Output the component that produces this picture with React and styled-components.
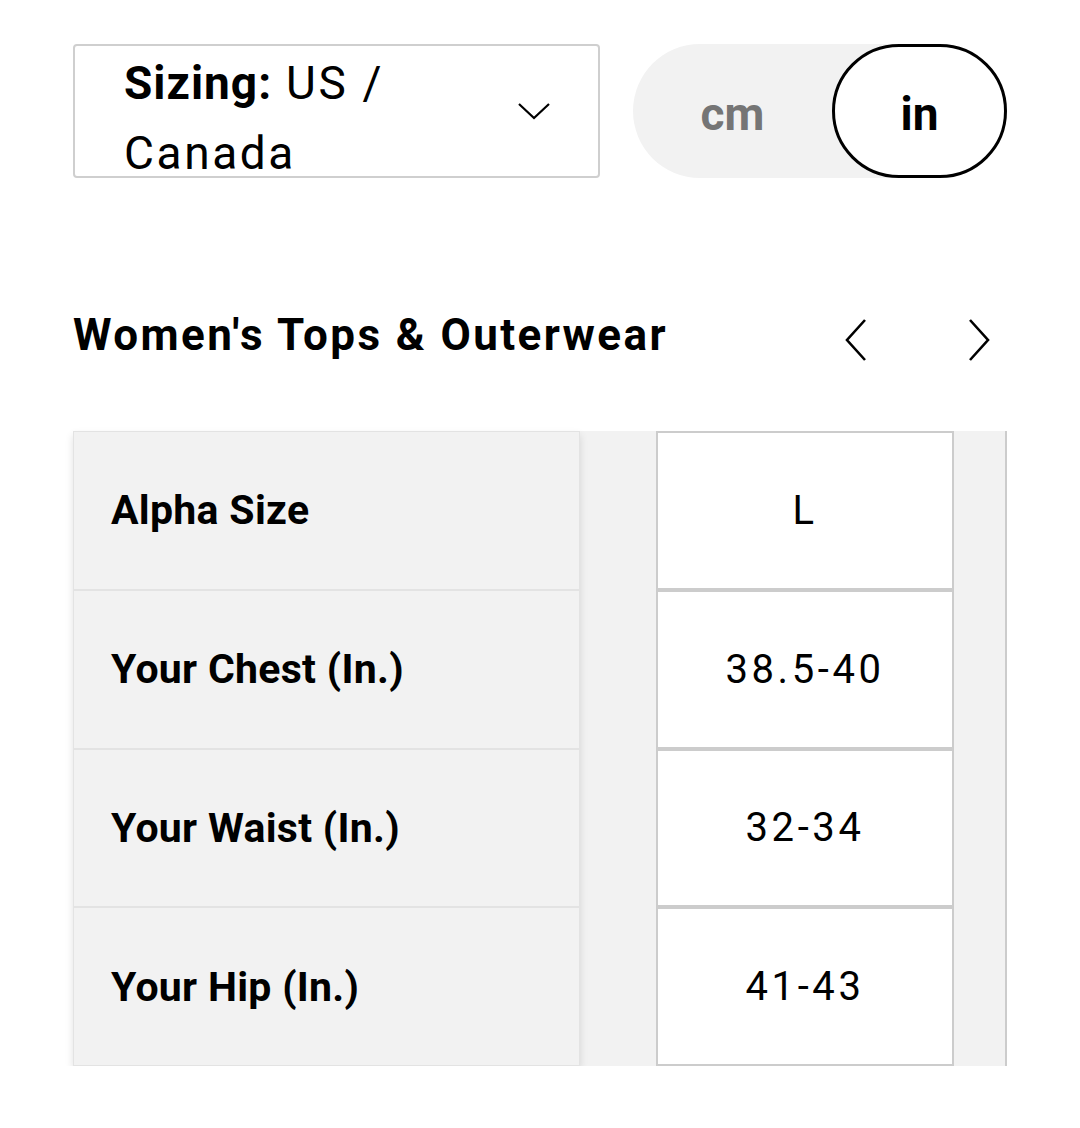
import React from "react";
import styled, {createGlobalStyle} from "styled-components";

const GlobalStyle = createGlobalStyle`
 body {
  margin: 0;
  background: #fff;
  font-family: Roboto, "Liberation Sans", sans-serif;
  color: #000;
 }
`;

const Page = styled.div`
 width: 934px;
 padding: 44px 0 0 73px;
`;

const Controls = styled.div`
 display: flex;
 gap: 33px;
`;

const Select = styled.div`
 box-sizing: border-box;
 width: 527px;
 height: 134px;
 border: 2px solid #cfcfcf;
 border-radius: 4px;
 display: flex;
 align-items: center;
 justify-content: space-between;
 padding: 0 48px 0 49px;
 overflow: hidden;
`;

const SelectText = styled.div`
 align-self: flex-start;
 padding-top: 2px;
 font-size: 46px;
 line-height: 70px;
 letter-spacing: 2.6px;
 width: 300px;
 b {
  font-weight: 700;
  letter-spacing: 1px;
 }
`;

const Toggle = styled.div`
 flex: 1;
 height: 134px;
 background: #f2f2f2;
 border-radius: 67px;
 display: flex;
`;

const ToggleOption = styled.div`
 box-sizing: border-box;
 width: ${({active}) => (active ? "175px" : "199px")};
 border-radius: 67px;
 border: ${({active}) => (active ? "3px solid #000" : "none")};
 background: ${({active}) => (active ? "#fff" : "transparent")};
 color: ${({active}) => (active ? "#000" : "#757575")};
 display: flex;
 align-items: center;
 justify-content: center;
 padding-top: 6px;
 font-size: 46px;
 font-weight: 700;
`;

const HeaderRow = styled.div`
 display: flex;
 align-items: center;
 margin-top: 130px;
`;

const Title = styled.h2`
 flex: 1;
 margin: 0;
 font-size: 44px;
 font-weight: 700;
 line-height: 52px;
 letter-spacing: 2.4px;
`;

const ArrowButton = styled.div`
 width: 56px;
 display: flex;
 justify-content: center;
 margin-top: 10px;
 margin-left: ${({gap}) => gap || 0}px;
`;

const Table = styled.div`
 display: flex;
 margin-top: 69px;
 height: 635px;
`;

const LabelColumn = styled.div`
 width: 507px;
 flex-shrink: 0;
 position: relative;
 z-index: 1;
 background: #f2f2f2;
 box-shadow: 0 4px 8px rgba(0, 0, 0, 0.12);
`;

const LabelCell = styled.div`
 box-sizing: border-box;
 height: 158.75px;
 border: 1.5px solid #e3e3e3;
 display: flex;
 align-items: center;
 padding-left: 37px;
 font-size: 41px;
 font-weight: 700;
 letter-spacing: 0.3px;
`;

const ScrollArea = styled.div`
 flex: 1;
 background: #f2f2f2;
 overflow: hidden;
 display: flex;
 gap: 51px;
 padding-left: 76px;
`;

const ValueColumn = styled.div`
 width: 298px;
 flex-shrink: 0;
`;

const ValueCell = styled.div`
 box-sizing: border-box;
 height: 158.75px;
 background: #fff;
 border: 2px solid #cccccc;
 display: flex;
 align-items: center;
 justify-content: center;
 font-size: 40px;
 letter-spacing: 3.6px;
`;

const rows = [
 {label: "Alpha Size", values: ["L", ""]},
 {label: "Your Chest (In.)", values: ["38.5-40", ""]},
 {label: "Your Waist (In.)", values: ["32-34", ""]},
 {label: "Your Hip (In.)", values: ["41-43", ""]},
];

const Chevron = ({dir}) => (
 <svg width='24' height='44' viewBox='0 0 24 44' fill='none'>
  <path
   d={dir === "left" ? "M21 2 L3 22 L21 42" : "M3 2 L21 22 L3 42"}
   stroke='#000'
   strokeWidth='2.6'
   strokeLinejoin='miter'
  />
 </svg>
);

const App = () => {
 return (
  <Page>
   <GlobalStyle />
   <Controls>
    <Select>
     <SelectText>
      <b>Sizing:</b> US / Canada
     </SelectText>
     <svg width='32' height='17' viewBox='0 0 32 17' fill='none'>
      <path d='M1 1 L16 15 L31 1' stroke='#000' strokeWidth='2.2' />
     </svg>
    </Select>
    <Toggle>
     <ToggleOption>cm</ToggleOption>
     <ToggleOption active>in</ToggleOption>
    </Toggle>
   </Controls>

   <HeaderRow>
    <Title>Women's Tops &amp; Outerwear</Title>
    <ArrowButton>
     <Chevron dir='left' />
    </ArrowButton>
    <ArrowButton gap={67}>
     <Chevron dir='right' />
    </ArrowButton>
   </HeaderRow>

   <Table>
    <LabelColumn>
     {rows.map((row, index) => (
      <LabelCell key={index}>{row.label}</LabelCell>
     ))}
    </LabelColumn>
    <ScrollArea>
     {[0, 1].map(col => (
      <ValueColumn key={col}>
       {rows.map((row, index) => (
        <ValueCell key={index}>{row.values[col]}</ValueCell>
       ))}
      </ValueColumn>
     ))}
    </ScrollArea>
   </Table>
  </Page>
 );
};

export default App;
